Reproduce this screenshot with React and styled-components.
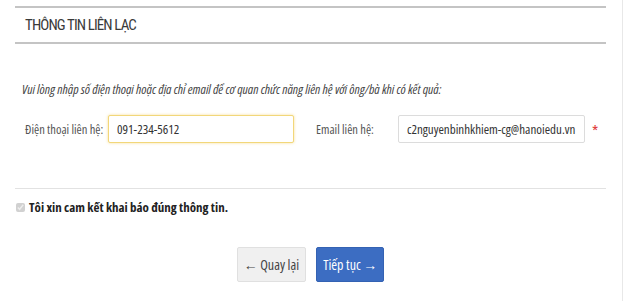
import React from "react"
import styled, { createGlobalStyle } from "styled-components"

const GlobalStyle = createGlobalStyle`
  html, body {
    margin: 0;
    padding: 0;
    background: #fff;
  }
  body {
    font-family: "Open Sans", "Liberation Sans", sans-serif;
    font-stretch: 75%;
    color: #333;
  }
`

const App = () => {
  return (
    <>
      <GlobalStyle />
      <Page>
        <Section>
          <SectionHeader>
            <SectionTitle>THÔNG TIN LIÊN LẠC</SectionTitle>
          </SectionHeader>
          <Hint>
            Vui lòng nhập số điện thoại hoặc địa chỉ email để cơ quan chức năng liên hệ với ông/bà khi có kết quả:
          </Hint>
          <FieldRow>
            <Field>
              <FieldLabel width="83px">Điện thoại liên hệ:</FieldLabel>
              <TextInput focused defaultValue="091-234-5612" width="186px" />
            </Field>
            <Field>
              <FieldLabel width="82px">Email liên hệ:</FieldLabel>
              <TextInput defaultValue="c2nguyenbinhkhiem-cg@hanoiedu.vn" width="187px" />
              <Required>*</Required>
            </Field>
          </FieldRow>
        </Section>
        <Divider />
        <Agreement>
          <Check type="checkbox" defaultChecked disabled />
          Tôi xin cam kết khai báo đúng thông tin.
        </Agreement>
        <Actions>
          <Button>← Quay lại</Button>
          <Button primary>Tiếp tục →</Button>
        </Actions>
      </Page>
    </>
  )
}

export default App

const Page = styled.div`
  width: 623px;
  height: 301px;
  box-sizing: border-box;
  border-right: 1px solid #e8e8e8;
  padding: 6px 16px 0 15px;
`

const Section = styled.div`
  display: flex;
  flex-direction: column;
`

const SectionHeader = styled.div`
  border-top: 2px solid #c4c4c4;
  border-bottom: 2px solid #c4c4c4;
  height: 34px;
  display: flex;
  align-items: center;
  padding-left: 10px;
`

const SectionTitle = styled.h2`
  margin: 0;
  font-family: "Roboto", "Open Sans", sans-serif;
  font-size: 15px;
  font-weight: 400;
  letter-spacing: -0.9px;
  color: #3a3a3a;
`

const Hint = styled.p`
  margin: 36px 0 0 7px;
  font-size: 13px;
  font-style: italic;
  color: #444;
  line-height: 18px;
`

const FieldRow = styled.div`
  display: flex;
  gap: 22px;
  margin-top: 17px;
  padding-left: 10px;
`

const Field = styled.div`
  display: flex;
  align-items: center;
`

const FieldLabel = styled.label`
  width: ${({ width }) => width};
  font-size: 12.5px;
  color: #555;
`

const TextInput = styled.input`
  width: ${({ width }) => width};
  height: 28px;
  box-sizing: border-box;
  padding: 0 8px;
  font-family: inherit;
  font-stretch: 75%;
  font-size: 13px;
  color: #333;
  border-radius: 2px;
  outline: none;
  border: 1px solid ${({ focused }) => (focused ? "#f2d77a" : "#dcdcdc")};
  box-shadow: ${({ focused }) =>
    focused ? "0 0 3px rgba(240, 200, 80, 0.6)" : "none"};
`

const Required = styled.span`
  margin-left: 7px;
  color: #e03c3c;
  font-size: 16px;
  margin-top: 4px;
`

const Divider = styled.hr`
  margin: 45px 0 0;
  border: none;
  border-top: 1px solid #e2e2e2;
`

const Agreement = styled.label`
  display: flex;
  align-items: center;
  gap: 4px;
  margin-top: 9px;
  font-size: 13px;
  font-weight: 700;
  color: #222;
`

const Check = styled.input`
  margin: 0 0 0 1px;
  width: 9px;
  height: 9px;
`

const Actions = styled.div`
  display: flex;
  justify-content: center;
  gap: 10px;
  margin-top: 31px;
`

const Button = styled.button`
  height: 35px;
  padding: 0 6px;
  font-family: inherit;
  font-stretch: 75%;
  font-size: 14px;
  border-radius: 2px;
  cursor: pointer;
  color: ${({ primary }) => (primary ? "#fff" : "#444")};
  background: ${({ primary }) => (primary ? "#3c6dc2" : "#f0f0f0")};
  border: 1px solid ${({ primary }) => (primary ? "#3462b3" : "#e0e0e0")};
`
